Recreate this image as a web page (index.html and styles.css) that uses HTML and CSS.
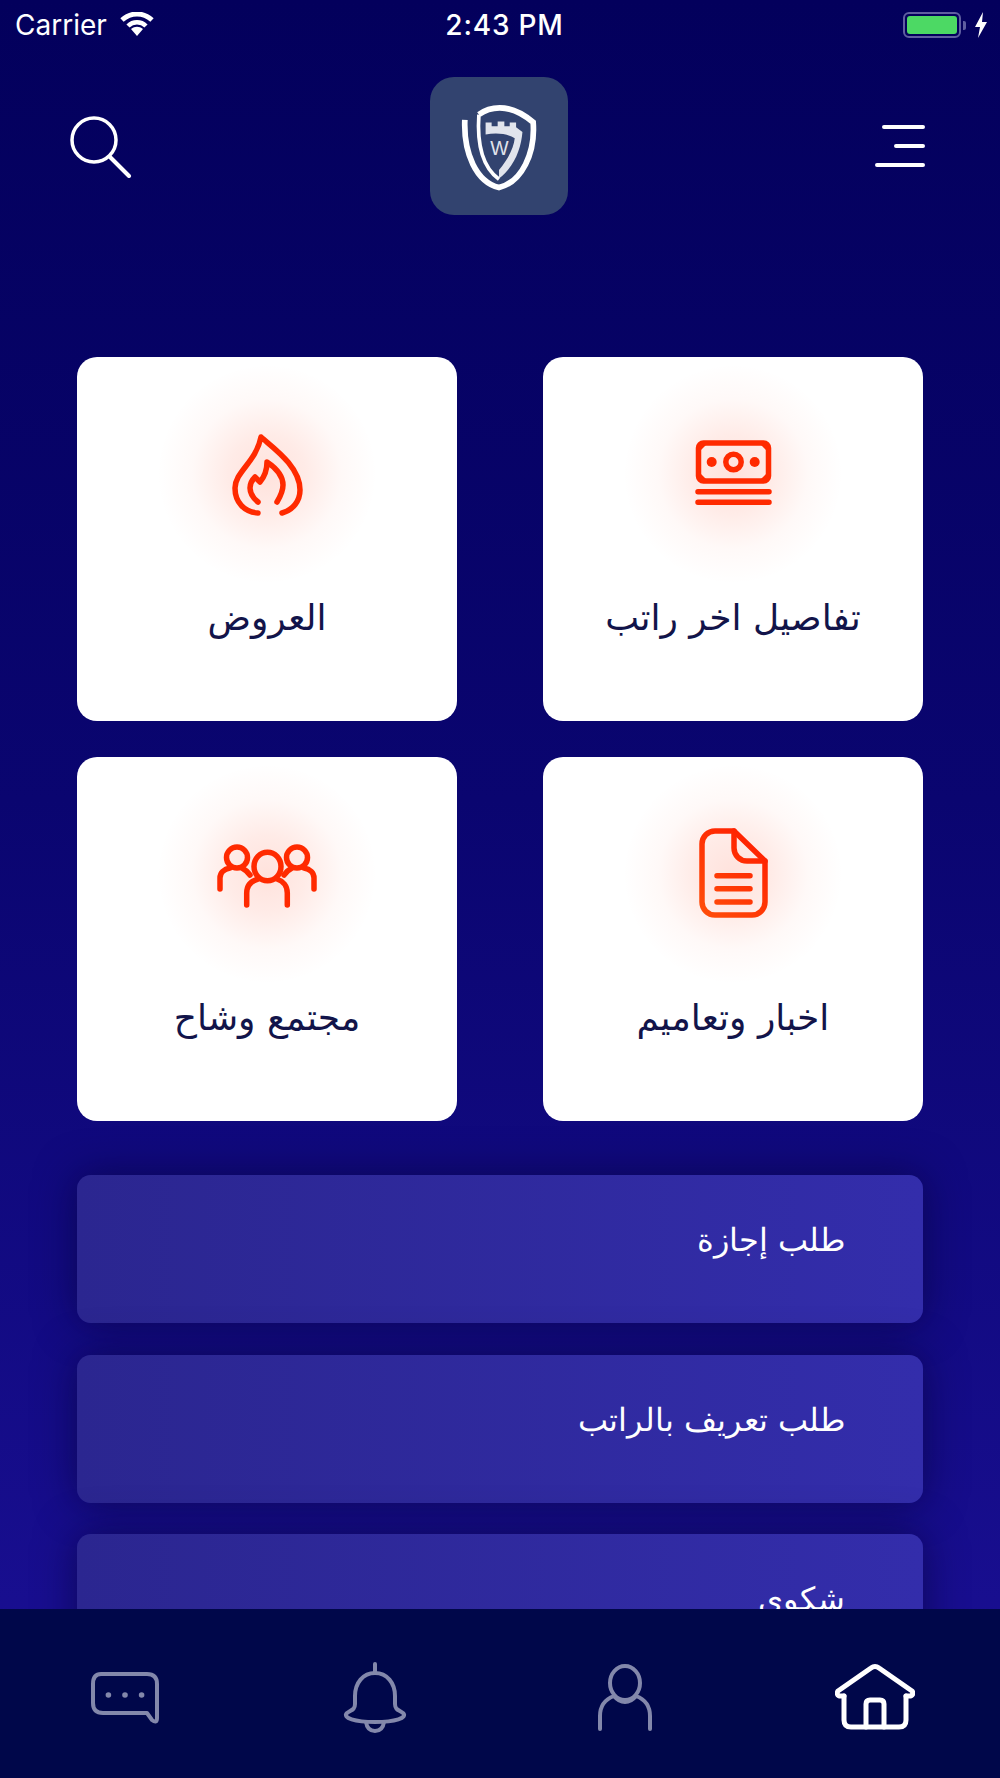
FILE: index.html
```html
<!DOCTYPE html>
<html lang="ar">
<head>
  <meta charset="UTF-8" />
  <meta name="viewport" content="width=device-width, initial-scale=1.0"/>
  <title>Home</title>
  <link rel="stylesheet" href="styles.css">
</head>
<body>
<div class="page">

  <!-- Status bar -->
  <div class="statusbar" dir="ltr">
    <div class="status-left">
      <span>Carrier</span>
      <svg class="wifi" viewBox="0 0 34 24" width="34" height="24">
        <path d="M2 8 C11 0 23 0 32 8" fill="none" stroke="#fff" stroke-width="5"/>
        <path d="M8 14 C13 9 21 9 26 14" fill="none" stroke="#fff" stroke-width="4.5"/>
        <path d="M11 17 C15 14 19 14 23 17 L17 24 Z" fill="#fff"/>
      </svg>
    </div>
    <div class="status-time">2:43 PM</div>
    <div class="status-right">
      <div class="battery"><div class="battery-fill"></div></div>
      <div class="battery-nub"></div>
      <svg class="bolt" viewBox="0 0 14 26" width="14" height="26">
        <path d="M9 0 L1 15 H6 L4 26 L13 10 H8 Z" fill="#fff"/>
      </svg>
    </div>
  </div>

  <!-- Header -->
  <header class="header">
    <svg class="search-icon" viewBox="0 0 64 64" width="64" height="64">
      <circle cx="25" cy="26" r="22" fill="none" stroke="#fff" stroke-width="3.5"/>
      <path d="M41 43 L60 62" stroke="#fff" stroke-width="4" stroke-linecap="round"/>
    </svg>
    <div class="logo">
      <svg viewBox="30 22 412 412" width="138" height="138">
        <path d="M134 150 C130 250 168 335 236 352 C304 335 345 250 338 157 C300 125 270 114 238 114 C215 114 192 122 176 134" fill="none" stroke="#fff" stroke-width="17"/>
        <path d="M176 134 C170 220 185 290 236 327" fill="none" stroke="#fff" stroke-width="11"/>
        <path d="M196 158 H214 V169 H232 V155 H252 V169 H268 V158 H287 V172 L306 186 C302 235 282 290 236 325 V300 C262 268 280 235 283 205 C260 190 225 188 196 194 Z" fill="#e1e4ec"/>
        <text x="237" y="255" class="logo-w">W</text>
      </svg>
    </div>
    <svg class="menu-icon" viewBox="0 0 54 54" width="54" height="54">
      <path d="M9 8 H48 M21 27 H48 M2 46 H48" stroke="#fff" stroke-width="4" stroke-linecap="round"/>
    </svg>
  </header>

  <main class="content">
    <!-- Cards -->
    <div class="cards">
      <a class="card">
        <div class="card-icon">
          <svg viewBox="27 14 120 120" width="120" height="120">
            <g class="red-line">
              <path d="M78 113 C64 112 55 102 55 88 C55 72 76 62 81 37 C92 47 120 66 120 90 C120 101 113 110 102 113"/>
              <path d="M78 102 C73 98 70 94 70 88 C70 84 72 80 75 77 L80 82 C85 76 87 70 87 62 C96 68 103 76 103 85 C103 92 100 97 97 102"/>
            </g>
          </svg>
        </div>
        <span class="card-label">العروض</span>
      </a>
      <a class="card">
        <div class="card-icon">
          <svg viewBox="33 14 120 120" width="120" height="120">
            <g class="red-line">
              <rect x="58.5" y="43" width="70" height="38" rx="5"/>
              <circle cx="93.5" cy="62" r="7.7"/>
              <path d="M58 91.7 H129 M58 102.3 H129"/>
            </g>
            <g class="red-fill">
              <circle cx="71.7" cy="62" r="5"/>
              <circle cx="114.7" cy="62" r="5"/>
              <path d="M59 44 H67 L59 52 Z M128 44 H120 L128 52 Z M59 80 H67 L59 72 Z M128 80 H120 L128 72 Z"/>
            </g>
          </svg>
        </div>
        <span class="card-label">تفاصيل اخر راتب</span>
      </a>
      <a class="card">
        <div class="card-icon">
          <svg viewBox="27 14 120 120" width="120" height="120">
            <g class="red-line">
              <ellipse cx="87.5" cy="66.5" rx="13.5" ry="14.3"/>
              <path d="M66.7 105 V93 C66.7 86 71 81 78 79 M107.3 105 V93 C107.3 86 103 81 97 79"/>
              <circle cx="57" cy="57.5" r="10.5"/>
              <circle cx="117" cy="57.5" r="10.5"/>
              <path d="M40 89 V78 C40 73 44 69 50 68 M70 75 C67 71 64 69 62 68 M134 89 V78 C134 73 130 69 124 68 M104 75 C107 71 110 69 112 68"/>
            </g>
          </svg>
        </div>
        <span class="card-label">مجتمع وشاح</span>
      </a>
      <a class="card">
        <div class="card-icon">
          <svg viewBox="33 14 120 120" width="120" height="120">
            <defs>
              <linearGradient id="docGrad" gradientUnits="userSpaceOnUse" x1="60" y1="110" x2="125" y2="40">
                <stop offset="0" stop-color="#ff4d0a"/>
                <stop offset="1" stop-color="#ff1e00"/>
              </linearGradient>
            </defs>
            <g class="doc-line">
              <path d="M94 31 H75 A13 13 0 0 0 62 44 V102 A13 13 0 0 0 75 115 H112 A13 13 0 0 0 125 102 V61 Z"/>
              <path d="M94 31 V48 A13 13 0 0 0 107 61 H125"/>
              <path d="M77 75.7 H110 M77 88.7 H110 M77 102 H110"/>
            </g>
          </svg>
        </div>
        <span class="card-label">اخبار وتعاميم</span>
      </a>
    </div>

    <!-- Request rows -->
    <div class="rows">
      <a class="row"><span>طلب إجازة</span></a>
      <a class="row"><span>طلب تعريف بالراتب</span></a>
      <a class="row"><span>شكوى</span></a>
    </div>
  </main>

  <!-- Bottom tabs -->
  <nav class="tabbar">
    <a class="tab">
      <svg viewBox="0 0 80 80" width="80" height="80">
        <path d="M16 16 H62 Q72 16 72 26 V60 Q72 66 67 62 L62 55 H18 Q8 55 8 45 V26 Q8 16 16 16 Z"/>
        <circle class="dot" cx="23.4" cy="37" r="2.8"/>
        <circle class="dot" cx="40" cy="37" r="2.8"/>
        <circle class="dot" cx="56.6" cy="37" r="2.8"/>
      </svg>
    </a>
    <a class="tab">
      <svg viewBox="0 0 80 80" width="80" height="80">
        <path d="M40 6 V15"/>
        <path d="M40 15 C28 15 20 25 20 38 V46 C20 52 16 52 12 55 C7 60 20 64 40 64 C60 64 73 60 68 55 C64 52 60 52 60 46 V38 C60 25 52 15 40 15 Z"/>
        <path d="M31 64 C32 71 36 73 40 73 C44 73 48 71 49 64"/>
      </svg>
    </a>
    <a class="tab">
      <svg viewBox="0 0 80 80" width="80" height="80">
        <ellipse cx="40" cy="25" rx="15" ry="17"/>
        <path d="M15 71 V58 C15 47 21 41 29 38 C33 43 36 44 40 44 C44 44 47 43 51 38 C59 41 65 47 65 58 V71"/>
      </svg>
    </a>
    <a class="tab tab-active">
      <svg viewBox="0 0 80 80" width="80" height="80">
        <path d="M9 38 H4 Q1 36 3 33 L36 10 Q40 7 44 10 L77 33 Q79 36 76 38 H71"/>
        <path d="M9 38 V62 Q9 69 16 69 H64 Q71 69 71 62 V38"/>
        <path d="M31 69 V46 Q31 42 35 42 H45 Q49 42 49 46 V69"/>
      </svg>
    </a>
  </nav>

</div>
</body>
</html>
```

FILE: styles.css
```css
* {
  margin: 0;
  padding: 0;
  box-sizing: border-box;
}

body {
  font-family: "DejaVu Sans", sans-serif;
}

.page {
  width: 1000px;
  height: 1778px;
  display: flex;
  flex-direction: column;
  overflow: hidden;
  background: linear-gradient(180deg, #03005c 0%, #0a0570 45%, #1b1096 100%);
}

/* status bar */
.statusbar {
  height: 50px;
  flex-shrink: 0;
  padding: 0 12px 0 15px;
  display: grid;
  grid-template-columns: 1fr auto 1fr;
  align-items: center;
  color: #fff;
  font-family: Inter, sans-serif;
  font-size: 28px;
}

.status-left {
  display: flex;
  align-items: center;
  gap: 13px;
}

.wifi {
  margin-top: -2px;
}

.status-time {
  font-size: 28px;
  font-weight: 500;
  letter-spacing: 0.8px;
  margin-left: 6px;
}

.status-right {
  display: flex;
  align-items: center;
  justify-content: flex-end;
}

.battery {
  width: 58px;
  height: 26px;
  border: 2px solid #5f5fa0;
  border-radius: 6px;
  padding: 2px;
}

.battery-fill {
  height: 100%;
  background-color: #4cd964;
  border-radius: 3px;
}

.battery-nub {
  width: 3px;
  height: 9px;
  background-color: #5f5fa0;
  border-radius: 0 2px 2px 0;
  margin-left: 2px;
}

.bolt {
  margin-left: 8px;
}

/* header */
.header {
  flex-shrink: 0;
  margin-top: 27px;
  padding: 0 71px 0 69px;
  display: grid;
  grid-template-columns: 1fr auto 1fr;
  align-items: center;
}

.menu-icon {
  justify-self: end;
}

.logo {
  width: 138px;
  height: 138px;
  background-color: #32436f;
  border-radius: 24px;
}

.logo svg {
  display: block;
}

.logo-w {
  font-family: "Liberation Sans", sans-serif;
  font-size: 58px;
  fill: #e1e4ec;
  text-anchor: middle;
}

/* main area */
.content {
  flex: 1;
  min-height: 0;
  overflow: hidden;
  padding: 142px 77px 0;
}

.cards {
  display: grid;
  grid-template-columns: 380px 380px;
  grid-auto-rows: 364px;
  column-gap: 86px;
  row-gap: 36px;
}

.card {
  background-color: #fff;
  border-radius: 20px;
  display: flex;
  flex-direction: column;
  align-items: center;
  padding-top: 7px;
}

.card-icon {
  width: 220px;
  height: 220px;
  display: flex;
  align-items: center;
  justify-content: center;
  background: radial-gradient(circle closest-side, rgba(255, 60, 20, 0.15) 0%, rgba(255, 60, 20, 0.1) 35%, rgba(255, 60, 20, 0.03) 68%, rgba(255, 60, 20, 0) 100%);
}

.card-label {
  margin-top: 10px;
  line-height: 48px;
  font-size: 36px;
  color: #12144a;
}

.red-line {
  fill: none;
  stroke: #ff2a00;
  stroke-width: 5.5;
  stroke-linecap: round;
  stroke-linejoin: round;
}

.red-fill {
  fill: #ff2a00;
}

.doc-line {
  fill: none;
  stroke: url(#docGrad);
  stroke-width: 5.5;
  stroke-linecap: round;
  stroke-linejoin: round;
}

/* rows */
.rows {
  margin-top: 54px;
  display: flex;
  flex-direction: column;
  gap: 31.5px;
}

.row {
  height: 148px;
  flex-shrink: 0;
  border-radius: 14px;
  padding: 0 78px 18px 0;
  display: flex;
  align-items: center;
  justify-content: flex-end;
  background: linear-gradient(90deg, #2b2690 0%, #332dab 100%);
  box-shadow: 0 0 40px rgba(8, 4, 60, 0.65);
  color: #fff;
  font-size: 32px;
  font-weight: 300;
}

/* bottom tabs */
.tabbar {
  height: 169px;
  flex-shrink: 0;
  padding-top: 49px;
  display: grid;
  grid-template-columns: repeat(4, 1fr);
  background-color: #00074a;
}

.tab {
  display: flex;
  justify-content: center;
  align-items: flex-start;
}

.tab svg {
  fill: none;
  stroke: #8388ab;
  stroke-width: 4;
  stroke-linecap: round;
  stroke-linejoin: round;
}

.tab .dot {
  fill: #8388ab;
  stroke: none;
}

.tab-active svg {
  stroke: #fff;
  stroke-width: 5;
}
```
